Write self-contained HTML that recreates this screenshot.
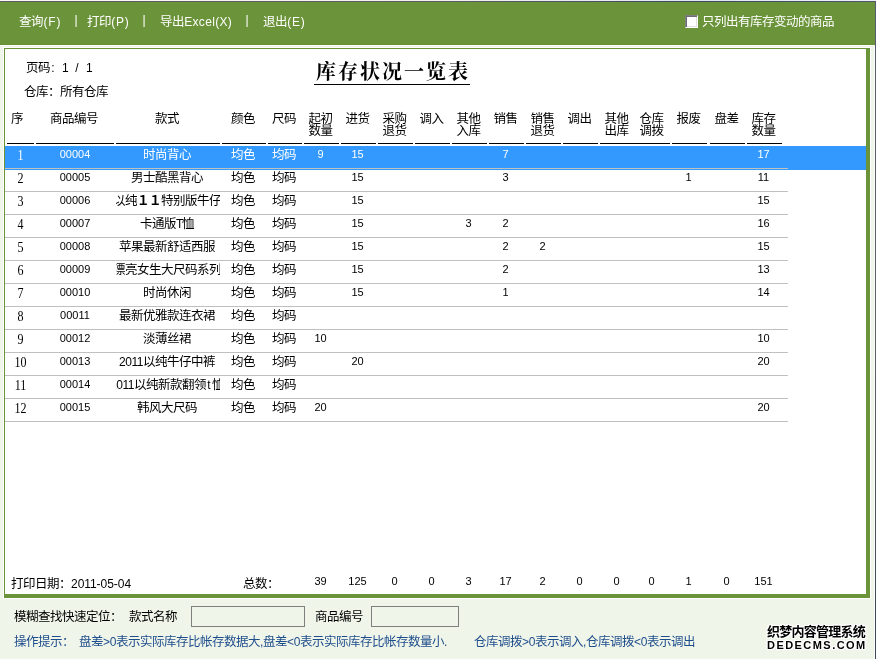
<!DOCTYPE html>
<html lang="zh-CN">
<head>
<meta charset="utf-8">
<title>库存状况一览表</title>
<style>
html,body{margin:0;padding:0;}
body{width:876px;height:659px;position:relative;overflow:hidden;background:#f0f5ea;
 font-family:"Liberation Sans","Noto Sans CJK SC",sans-serif;font-size:12.5px;letter-spacing:-0.5px;line-height:12px;color:#000;}
div,span{box-sizing:border-box;}
#root{position:absolute;left:0;top:0;width:876px;height:659px;overflow:hidden;will-change:transform;}
.abs,.t,.h,.c,.n,.s,.k{position:absolute;white-space:nowrap;}
.a{display:inline-block;white-space:pre;text-align:left;font-size:12px;}
#topl{left:0;top:0;width:876px;height:1px;background:linear-gradient(to right,#fafafa 0,#f1f1f1 50%,#dfe7f5 80%,#eef1f8 100%);}
#topd{left:0;top:1px;width:876px;height:1px;background:linear-gradient(to right,#5c5c5c 0,#5e5e60 50%,#3e495d 80%,#4d566a 100%);}
#rightd{left:875px;top:1px;width:1px;height:658px;background:linear-gradient(to bottom,#565c6e 0,#5f6066 50%,#3a465a 100%);}
#rightw{left:874px;top:45px;width:1px;height:614px;background:#fbfdf8;}
#bar{left:0;top:2px;width:875px;height:43px;background:#6b9339;border-bottom:1px solid #64902f;}
#barw{left:0;top:45px;width:875px;height:1px;background:#fff;}
#bar .t{color:#fff;top:12px;height:16px;line-height:16px;}
#chk{left:685px;top:13px;width:13px;height:13px;background:#fff;border:1px solid #808080;border-right-color:#fff;border-bottom-color:#fff;box-shadow:inset 1px 1px 0 #6e6e78, inset -1px -1px 0 #e0e0e0;}
#panelw{left:3px;top:47px;width:868px;height:552px;background:#fff;}
#panel{left:4px;top:48px;width:866px;height:550px;background:#fff;border-style:solid;border-color:#6b9339;border-width:1px 4px 4px 1px;}
.t{height:16px;line-height:16px;}
.h{text-align:center;line-height:12px;top:113px;white-space:normal;word-break:break-all;}
.hl{position:absolute;top:143px;height:1px;background:#000;}
.gl{position:absolute;left:5px;width:783px;height:1px;background:#c0c0c0;}
#sel{left:5px;top:146px;width:861px;height:24px;background:#3399ff;}
.c{text-align:center;height:16px;line-height:16px;overflow:hidden;padding-right:2px;}
.k{height:16px;line-height:16px;overflow:hidden;}
.k>span.in{position:absolute;left:50%;top:0;transform:translateX(-50%);white-space:nowrap;margin-left:-1px;}
.n{text-align:center;font-size:11px;letter-spacing:0;height:14px;line-height:14px;}
.s{text-align:center;font-family:"Liberation Serif",serif;font-size:14px;letter-spacing:0;height:16px;line-height:16px;transform:scaleX(0.86);}
.w{color:#fff;}
#title{left:314px;top:56px;width:156px;height:29px;border-bottom:1px solid #000;font-family:"Liberation Serif","Noto Serif CJK SC",serif;font-weight:700;font-size:20px;line-height:32px;text-align:center;letter-spacing:2px;padding-left:2px;}
.inp{position:absolute;top:606px;height:21px;border:1px solid #7f7f7f;background:#f0f5ea;}
.hint{color:#1e4d8c;}
.wm{font-weight:bold;color:#000;
 text-shadow:-1px 0 #fff,1px 0 #fff,0 -1px #fff,0 1px #fff,-1px -1px #fff,1px 1px #fff,-1px 1px #fff,1px -1px #fff;}
</style>
</head>
<body>
<div id="root">
<div class="abs" id="topl"></div>
<div class="abs" id="bar">

<span class="t" style="left:19px">查询<span class="a" style="width:18px;letter-spacing:0.89px;padding-left:0.45px">(F)</span></span>
<span class="t" style="left:73px;top:10px"><span class="a" style="width:6px;letter-spacing:2.88px;padding-left:1.44px">|</span></span>
<span class="t" style="left:87px">打印<span class="a" style="width:18px;letter-spacing:0.67px;padding-left:0.33px">(P)</span></span>
<span class="t" style="left:141px;top:10px"><span class="a" style="width:6px;letter-spacing:2.88px;padding-left:1.44px">|</span></span>
<span class="t" style="left:160px">导出<span class="a" style="width:48px;letter-spacing:0.33px;padding-left:0.17px">Excel(X)</span></span>
<span class="t" style="left:244px;top:10px"><span class="a" style="width:6px;letter-spacing:2.88px;padding-left:1.44px">|</span></span>
<span class="t" style="left:263px">退出<span class="a" style="width:18px;letter-spacing:0.67px;padding-left:0.33px">(E)</span></span>
<span class="abs" id="chk"></span>
<span class="t" style="left:702px">只列出有库存变动的商品</span>
</div>
<div class="abs" id="topd"></div>
<div class="abs" id="barw"></div>
<div class="abs" id="rightw"></div>
<div class="abs" id="rightd"></div>
<div class="abs" id="panelw"></div>
<div class="abs" id="panel"></div>
<div class="t" style="left:26px;top:60px">页码<span class="a" style="width:6px;letter-spacing:2.67px;padding-left:1.33px">:</span><span class="a" style="width:6px"> </span><span class="a" style="width:6px;letter-spacing:-0.67px;padding-left:0.00px">1</span><span class="a" style="width:6px"> </span><span class="a" style="width:6px;letter-spacing:2.67px;padding-left:1.33px">/</span><span class="a" style="width:6px"> </span><span class="a" style="width:6px;letter-spacing:-0.67px;padding-left:0.00px">1</span></div>
<div class="t" style="left:24px;top:84px">仓库：所有仓库</div>
<div class="abs" id="title">库存状况一览表</div>
<div class="h" style="left:11px;width:12px">序</div>
<div class="h" style="left:25px;width:98px">商品编号</div>
<div class="h" style="left:105px;width:124px">款式</div>
<div class="h" style="left:211px;width:64px">颜色</div>
<div class="h" style="left:257px;width:54px">尺码</div>
<div class="h" style="left:293px;width:55px">起初<br>数量</div>
<div class="h" style="left:330px;width:55px">进货</div>
<div class="h" style="left:367px;width:55px">采购<br>退货</div>
<div class="h" style="left:404px;width:55px">调入</div>
<div class="h" style="left:441px;width:55px">其他<br>入库</div>
<div class="h" style="left:478px;width:55px">销售</div>
<div class="h" style="left:515px;width:55px">销售<br>退货</div>
<div class="h" style="left:552px;width:55px">调出</div>
<div class="h" style="left:589px;width:55px">其他<br>出库</div>
<div class="h" style="left:624px;width:55px">仓库<br>调拨</div>
<div class="h" style="left:661px;width:55px">报废</div>
<div class="h" style="left:699px;width:55px">盘差</div>
<div class="h" style="left:736px;width:55px">库存<br>数量</div>
<div class="hl" style="left:7px;width:27px"></div>
<div class="hl" style="left:36px;width:78px"></div>
<div class="hl" style="left:116px;width:104px"></div>
<div class="hl" style="left:222px;width:44px"></div>
<div class="hl" style="left:268px;width:34px"></div>
<div class="hl" style="left:304px;width:35px"></div>
<div class="hl" style="left:341px;width:35px"></div>
<div class="hl" style="left:378px;width:35px"></div>
<div class="hl" style="left:415px;width:35px"></div>
<div class="hl" style="left:452px;width:35px"></div>
<div class="hl" style="left:489px;width:35px"></div>
<div class="hl" style="left:526px;width:35px"></div>
<div class="hl" style="left:563px;width:35px"></div>
<div class="hl" style="left:600px;width:35px"></div>
<div class="hl" style="left:635px;width:35px"></div>
<div class="hl" style="left:672px;width:35px"></div>
<div class="hl" style="left:710px;width:35px"></div>
<div class="hl" style="left:747px;width:35px"></div>
<div class="abs" id="sel"></div>
<div class="gl" style="top:168px"></div>
<div class="gl" style="top:191px"></div>
<div class="gl" style="top:214px"></div>
<div class="gl" style="top:237px"></div>
<div class="gl" style="top:260px"></div>
<div class="gl" style="top:283px"></div>
<div class="gl" style="top:306px"></div>
<div class="gl" style="top:329px"></div>
<div class="gl" style="top:352px"></div>
<div class="gl" style="top:375px"></div>
<div class="gl" style="top:398px"></div>
<div class="gl" style="top:421px"></div>
<div class="s w" style="left:7px;width:27px;top:148px">1</div>
<div class="n w" style="left:36px;width:78px;top:147px">00004</div>
<div class="k w" style="left:116px;width:104px;top:147px"><span class="in">时尚背心</span></div>
<div class="c w" style="left:222px;width:44px;top:147px">均色</div>
<div class="c w" style="left:268px;width:34px;top:147px">均码</div>
<div class="n w" style="left:303px;width:35px;top:147px">9</div>
<div class="n w" style="left:340px;width:35px;top:147px">15</div>
<div class="n w" style="left:488px;width:35px;top:147px">7</div>
<div class="n w" style="left:746px;width:35px;top:147px">17</div>
<div class="s" style="left:7px;width:27px;top:171px">2</div>
<div class="n" style="left:36px;width:78px;top:170px">00005</div>
<div class="k" style="left:116px;width:104px;top:170px"><span class="in">男士酷黑背心</span></div>
<div class="c" style="left:222px;width:44px;top:170px">均色</div>
<div class="c" style="left:268px;width:34px;top:170px">均码</div>
<div class="n" style="left:340px;width:35px;top:170px">15</div>
<div class="n" style="left:488px;width:35px;top:170px">3</div>
<div class="n" style="left:671px;width:35px;top:170px">1</div>
<div class="n" style="left:746px;width:35px;top:170px">11</div>
<div class="s" style="left:7px;width:27px;top:194px">3</div>
<div class="n" style="left:36px;width:78px;top:193px">00006</div>
<div class="k" style="left:116px;width:104px;top:193px"><span class="in">以纯<b>１１</b>特别版牛仔</span></div>
<div class="c" style="left:222px;width:44px;top:193px">均色</div>
<div class="c" style="left:268px;width:34px;top:193px">均码</div>
<div class="n" style="left:340px;width:35px;top:193px">15</div>
<div class="n" style="left:746px;width:35px;top:193px">15</div>
<div class="s" style="left:7px;width:27px;top:217px">4</div>
<div class="n" style="left:36px;width:78px;top:216px">00007</div>
<div class="k" style="left:116px;width:104px;top:216px"><span class="in">卡通版<span class="a" style="width:6px;letter-spacing:-1.33px;padding-left:0.00px">T</span>恤</span></div>
<div class="c" style="left:222px;width:44px;top:216px">均色</div>
<div class="c" style="left:268px;width:34px;top:216px">均码</div>
<div class="n" style="left:340px;width:35px;top:216px">15</div>
<div class="n" style="left:451px;width:35px;top:216px">3</div>
<div class="n" style="left:488px;width:35px;top:216px">2</div>
<div class="n" style="left:746px;width:35px;top:216px">16</div>
<div class="s" style="left:7px;width:27px;top:240px">5</div>
<div class="n" style="left:36px;width:78px;top:239px">00008</div>
<div class="k" style="left:116px;width:104px;top:239px"><span class="in">苹果最新舒适西服</span></div>
<div class="c" style="left:222px;width:44px;top:239px">均色</div>
<div class="c" style="left:268px;width:34px;top:239px">均码</div>
<div class="n" style="left:340px;width:35px;top:239px">15</div>
<div class="n" style="left:488px;width:35px;top:239px">2</div>
<div class="n" style="left:525px;width:35px;top:239px">2</div>
<div class="n" style="left:746px;width:35px;top:239px">15</div>
<div class="s" style="left:7px;width:27px;top:263px">6</div>
<div class="n" style="left:36px;width:78px;top:262px">00009</div>
<div class="k" style="left:116px;width:104px;top:262px"><span class="in">漂亮女生大尺码系列</span></div>
<div class="c" style="left:222px;width:44px;top:262px">均色</div>
<div class="c" style="left:268px;width:34px;top:262px">均码</div>
<div class="n" style="left:340px;width:35px;top:262px">15</div>
<div class="n" style="left:488px;width:35px;top:262px">2</div>
<div class="n" style="left:746px;width:35px;top:262px">13</div>
<div class="s" style="left:7px;width:27px;top:286px">7</div>
<div class="n" style="left:36px;width:78px;top:285px">00010</div>
<div class="k" style="left:116px;width:104px;top:285px"><span class="in">时尚休闲</span></div>
<div class="c" style="left:222px;width:44px;top:285px">均色</div>
<div class="c" style="left:268px;width:34px;top:285px">均码</div>
<div class="n" style="left:340px;width:35px;top:285px">15</div>
<div class="n" style="left:488px;width:35px;top:285px">1</div>
<div class="n" style="left:746px;width:35px;top:285px">14</div>
<div class="s" style="left:7px;width:27px;top:309px">8</div>
<div class="n" style="left:36px;width:78px;top:308px">00011</div>
<div class="k" style="left:116px;width:104px;top:308px"><span class="in">最新优雅款连衣裙</span></div>
<div class="c" style="left:222px;width:44px;top:308px">均色</div>
<div class="c" style="left:268px;width:34px;top:308px">均码</div>
<div class="s" style="left:7px;width:27px;top:332px">9</div>
<div class="n" style="left:36px;width:78px;top:331px">00012</div>
<div class="k" style="left:116px;width:104px;top:331px"><span class="in">淡薄丝裙</span></div>
<div class="c" style="left:222px;width:44px;top:331px">均色</div>
<div class="c" style="left:268px;width:34px;top:331px">均码</div>
<div class="n" style="left:303px;width:35px;top:331px">10</div>
<div class="n" style="left:746px;width:35px;top:331px">10</div>
<div class="s" style="left:7px;width:27px;top:355px">10</div>
<div class="n" style="left:36px;width:78px;top:354px">00013</div>
<div class="k" style="left:116px;width:104px;top:354px"><span class="in"><span class="a" style="width:24px;letter-spacing:-0.45px;padding-left:0.00px">2011</span>以纯牛仔中裤</span></div>
<div class="c" style="left:222px;width:44px;top:354px">均色</div>
<div class="c" style="left:268px;width:34px;top:354px">均码</div>
<div class="n" style="left:340px;width:35px;top:354px">20</div>
<div class="n" style="left:746px;width:35px;top:354px">20</div>
<div class="s" style="left:7px;width:27px;top:378px">11</div>
<div class="n" style="left:36px;width:78px;top:377px">00014</div>
<div class="k" style="left:116px;width:104px;top:377px"><span class="in"><span class="a" style="width:24px;letter-spacing:-0.45px;padding-left:0.00px">2011</span>以纯新款翻领<span class="a" style="width:6px;letter-spacing:2.67px;padding-left:1.33px">t</span>恤</span></div>
<div class="c" style="left:222px;width:44px;top:377px">均色</div>
<div class="c" style="left:268px;width:34px;top:377px">均码</div>
<div class="s" style="left:7px;width:27px;top:401px">12</div>
<div class="n" style="left:36px;width:78px;top:400px">00015</div>
<div class="k" style="left:116px;width:104px;top:400px"><span class="in">韩风大尺码</span></div>
<div class="c" style="left:222px;width:44px;top:400px">均色</div>
<div class="c" style="left:268px;width:34px;top:400px">均码</div>
<div class="n" style="left:303px;width:35px;top:400px">20</div>
<div class="n" style="left:746px;width:35px;top:400px">20</div>
<div class="t" style="left:11px;top:576px">打印日期：<span class="a" style="width:60px;letter-spacing:-0.05px;padding-left:0.00px">2011-05-04</span></div>
<div class="t" style="left:243px;top:576px">总数：</div>
<div class="n" style="left:303px;width:35px;top:574px">39</div>
<div class="n" style="left:340px;width:35px;top:574px">125</div>
<div class="n" style="left:377px;width:35px;top:574px">0</div>
<div class="n" style="left:414px;width:35px;top:574px">0</div>
<div class="n" style="left:451px;width:35px;top:574px">3</div>
<div class="n" style="left:488px;width:35px;top:574px">17</div>
<div class="n" style="left:525px;width:35px;top:574px">2</div>
<div class="n" style="left:562px;width:35px;top:574px">0</div>
<div class="n" style="left:599px;width:35px;top:574px">0</div>
<div class="n" style="left:634px;width:35px;top:574px">0</div>
<div class="n" style="left:671px;width:35px;top:574px">1</div>
<div class="n" style="left:709px;width:35px;top:574px">0</div>
<div class="n" style="left:746px;width:35px;top:574px">151</div>
<div class="t" style="left:14px;top:609px">模糊查找快速定位：</div>
<div class="t" style="left:129px;top:609px">款式名称</div>
<div class="inp" style="left:191px;width:114px"></div>
<div class="t" style="left:315px;top:609px">商品编号</div>
<div class="inp" style="left:371px;width:88px"></div>
<div class="t hint" style="left:14px;top:634px">操作提示：</div>
<div class="t hint" style="left:79px;top:634px">盘差<span class="a" style="width:13px;letter-spacing:-0.34px;padding-left:0.00px">&gt;0</span>表示实际库存比帐存数据大<span class="a" style="width:3px;letter-spacing:-0.33px;padding-left:0.00px">,</span>盘差<span class="a" style="width:13px;letter-spacing:-0.34px;padding-left:0.00px">&lt;0</span>表示实际库存比帐存数量小<span class="a" style="width:3px;letter-spacing:-0.33px;padding-left:0.00px">.</span></div>
<div class="t hint" style="left:474px;top:634px">仓库调拨<span class="a" style="width:13px;letter-spacing:-0.34px;padding-left:0.00px">&gt;0</span>表示调入<span class="a" style="width:3px;letter-spacing:-0.33px;padding-left:0.00px">,</span>仓库调拨<span class="a" style="width:13px;letter-spacing:-0.34px;padding-left:0.00px">&lt;0</span>表示调出</div>
<div class="abs wm" style="left:767px;top:624px;font-size:13px;letter-spacing:-0.75px;height:16px;line-height:16px">织梦内容管理系统</div>
<div class="abs wm" style="left:767px;top:637px;font-size:11px;letter-spacing:1.45px;height:16px;line-height:16px">DEDECMS.COM</div>
</div>
</body>
</html>
